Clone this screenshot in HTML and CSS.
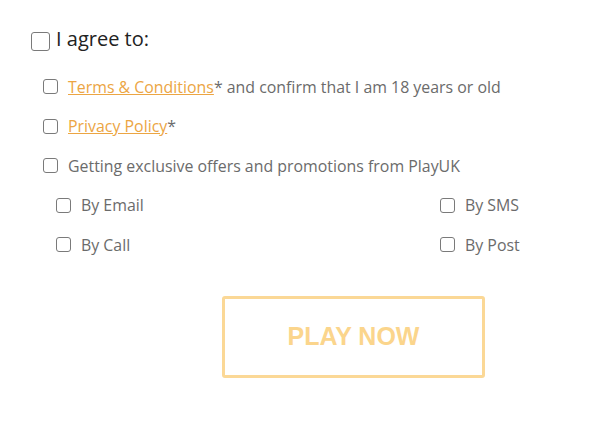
FILE: index.html
```html
<!DOCTYPE html>
<html>
    <head>
        <link rel="stylesheet" href="styles.css">
    </head>
    <body>
        <form class="consent">
            <label class="agree">
                <input type="checkbox" class="box-big">
                <span>I agree to:</span>
            </label>

            <div class="options">
                <label class="row">
                    <input type="checkbox" class="box">
                    <span><a href="#">Terms &amp; Conditions</a>* and confirm that I am 18 years or old</span>
                </label>
                <label class="row">
                    <input type="checkbox" class="box">
                    <span><a href="#">Privacy Policy</a>*</span>
                </label>
                <label class="row">
                    <input type="checkbox" class="box">
                    <span>Getting exclusive offers and promotions from PlayUK</span>
                </label>

                <div class="channels">
                    <label class="row">
                        <input type="checkbox" class="box">
                        <span>By Email</span>
                    </label>
                    <label class="row">
                        <input type="checkbox" class="box">
                        <span>By SMS</span>
                    </label>
                    <label class="row">
                        <input type="checkbox" class="box">
                        <span>By Call</span>
                    </label>
                    <label class="row">
                        <input type="checkbox" class="box">
                        <span>By Post</span>
                    </label>
                </div>
            </div>

            <div class="actions">
                <button type="button" class="play" disabled>PLAY NOW</button>
            </div>
        </form>
    </body>
</html>
```

FILE: styles.css
```css
body
{
    margin: 0;
    background: white;
    font-family: "Open Sans", "Noto Sans", sans-serif;
}
.consent { padding: 28px 0 0 31px; width: 540px; }

.agree { display: flex; align-items: center; gap: 6px; color: #222; font-size: 20px; }
.agree span { position: relative; top: -3px; }

.box-big, .box
{
    -webkit-appearance: none; appearance: none; margin: 0; flex: none;
    border: 1px solid #7a7a7a; border-radius: 3px; background: white;
}
.box-big { width: 19px; height: 19px; }
.box { width: 15px; height: 15px; }

.options { padding: 12px 0 0 12px; }
.row { display: flex; align-items: center; gap: 10px; height: 39.5px; color: #6b6b6b; font-size: 15.9px; }
.row a { color: #eca543; text-decoration: underline; }

.channels
{
    display: grid; grid-template-columns: 384px auto;
    padding-left: 13px;
}

.actions { padding: 31px 0 0 191px; }
.play
{
    width: 263px; height: 82px;
    background: white; border: 3px solid #fbd896; border-radius: 3px;
    color: #fbd58c; font-family: "Liberation Sans", Arial, sans-serif;
    font-size: 25px; font-weight: bold;
}
```
